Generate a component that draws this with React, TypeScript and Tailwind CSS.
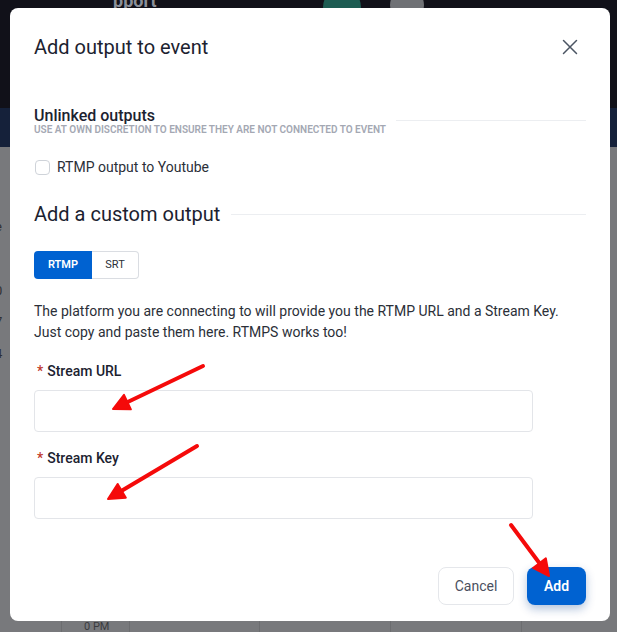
import React from "react";

function Arrow({ x1, y1, x2, y2 }: { x1: number; y1: number; x2: number; y2: number }) {
  const dx = x2 - x1;
  const dy = y2 - y1;
  const len = Math.sqrt(dx * dx + dy * dy);
  const ux = dx / len;
  const uy = dy / len;
  const headLen = 16;
  const headW = 8;
  const bx = x2 - ux * headLen;
  const by = y2 - uy * headLen;
  const px = -uy;
  const py = ux;
  const pts = `${x2},${y2} ${bx + px * headW},${by + py * headW} ${bx - px * headW},${by - py * headW}`;
  return (
    <g>
      <line x1={x1} y1={y1} x2={bx + ux * 2} y2={by + uy * 2} stroke="#f50a0a" strokeWidth={4} strokeLinecap="round" />
      <polygon points={pts} fill="#f50a0a" stroke="#f50a0a" strokeWidth={2} strokeLinejoin="round" />
    </g>
  );
}

export default function App() {
  return (
    <div
      className="relative w-[617px] h-[632px] overflow-hidden bg-[#78797c]"
      style={{ fontFamily: "Roboto, 'Noto Sans', sans-serif" }}
    >
      {/* background page (dimmed) */}
      <div className="flex flex-col h-full">
        <div className="h-[108px] bg-[#111119] flex items-start">
          <div className="ml-[113px] -mt-[13px] text-[18px] font-bold text-[#8a8f99]">pport</div>
          <div className="ml-[166px] -mt-[12px] w-[38px] h-[38px] rounded-full bg-[#1d5c52]" />
          <div className="ml-[29px] -mt-[12px] w-[34px] h-[34px] rounded-full bg-[#6f7175]" />
        </div>
        <div className="h-[39px] bg-[#15213a]" />
        <div className="flex-1 flex flex-col text-[13px] text-[#2e2f33] -ml-[5px]">
          <div className="mt-[70px]">e</div>
          <div className="mt-[44px]">0</div>
          <div className="mt-[12px]">7</div>
          <div className="mt-[12px]">4</div>
          <div className="mt-[12px]">l</div>
        </div>
        <div className="h-[12px] flex text-[11px] text-[#3a3b3f]">
          <div className="w-[62px] border-r border-[#6c6d70]" />
          <div className="w-[68px] border-r border-[#6c6d70] pl-[22px] leading-[14px]">0 PM</div>
          <div className="w-[130px] border-r border-[#6c6d70]" />
          <div className="w-[131px] border-r border-[#6c6d70]" />
          <div className="w-[131px] border-r border-[#6c6d70]" />
        </div>
      </div>

      {/* modal */}
      <div className="absolute left-[10px] top-[8px] w-[600px] h-[613px] bg-white rounded-lg px-6 flex flex-col">
        <div className="mt-[25px] h-[28px] flex items-center justify-between">
          <div className="text-[20px] leading-[28px] text-[#1c2230]">Add output to event</div>
          <svg width="16" height="16" viewBox="0 0 16 16" className="mr-[8px]">
            <path d="M1.5 1.5 L14.5 14.5 M14.5 1.5 L1.5 14.5" stroke="#4b5563" strokeWidth="1.5" strokeLinecap="round" />
          </svg>
        </div>

        <div className="mt-[45px] flex items-center">
          <div className="flex flex-col">
            <div className="text-[16px] leading-[19px] font-medium text-[#1c2230]">Unlinked outputs</div>
            <div className="text-[10px] leading-[10px] font-semibold uppercase text-[#a4a8b3]">
              Use at own discretion to ensure they are not connected to event
            </div>
          </div>
          <div className="flex-1 ml-[10px] h-px bg-[#eceef1]" />
        </div>

        <div className="mt-[22px] h-[20px] flex items-center gap-[7px]">
          <div className="ml-[1px] w-[15px] h-[15px] rounded-[4px] border border-[#cfd3d9] bg-white" />
          <div className="text-[14px] text-[#2b2f38]">RTMP output to Youtube</div>
        </div>

        <div className="mt-[24px] flex items-center">
          <div className="text-[20px] leading-[26px] text-[#1c2230]">Add a custom output</div>
          <div className="flex-1 ml-[11px] h-px bg-[#eceef1]" />
        </div>

        <div className="mt-[24px] flex">
          <div className="h-[28px] w-[58px] flex items-center justify-center rounded-l-[4px] bg-[#0062d1] text-white text-[11px] font-semibold">
            RTMP
          </div>
          <div className="h-[28px] w-[47px] flex items-center justify-center rounded-r-[4px] border border-l-0 border-[#dadde2] text-[#2b2f38] text-[11px]">
            SRT
          </div>
        </div>

        <div className="mt-[22px] text-[14px] leading-[21px] text-[#2b2f38]">
          The platform you are connecting to will provide you the RTMP URL and a Stream Key.
          <br />
          Just copy and paste them here. RTMPS works too!
        </div>

        <div className="mt-[18px] h-[20px] flex items-center text-[14px] font-medium text-[#1c2230]">
          <span className="text-[#c0392b] ml-[3px] mr-[4px]">*</span>Stream URL
        </div>
        <div className="mt-[9px] w-[499px] h-[42px] rounded-[4px] border border-[#e3e5e9] bg-white" />

        <div className="mt-[16px] h-[20px] flex items-center text-[14px] font-medium text-[#1c2230]">
          <span className="text-[#c0392b] ml-[3px] mr-[4px]">*</span>Stream Key
        </div>
        <div className="mt-[9px] w-[499px] h-[42px] rounded-[4px] border border-[#e3e5e9] bg-white" />

        <div className="mt-[48px] flex justify-end gap-[13px]">
          <div className="h-[38px] w-[76px] flex items-center justify-center rounded-lg border border-[#e5e7eb] text-[14px] text-[#4b5060]">
            Cancel
          </div>
          <div className="h-[38px] w-[59px] flex items-center justify-center rounded-lg bg-[#0062d1] text-[14px] font-semibold text-white shadow-[0_4px_10px_rgba(0,60,140,0.3)]">
            Add
          </div>
        </div>
      </div>

      {/* annotation arrows */}
      <svg className="absolute inset-0 pointer-events-none" width="617" height="632">
        <Arrow x1={203} y1={366} x2={113} y2={409} />
        <Arrow x1={197} y1={446} x2={108} y2={499} />
        <Arrow x1={511} y1={525} x2={549} y2={576} />
      </svg>
    </div>
  );
}
